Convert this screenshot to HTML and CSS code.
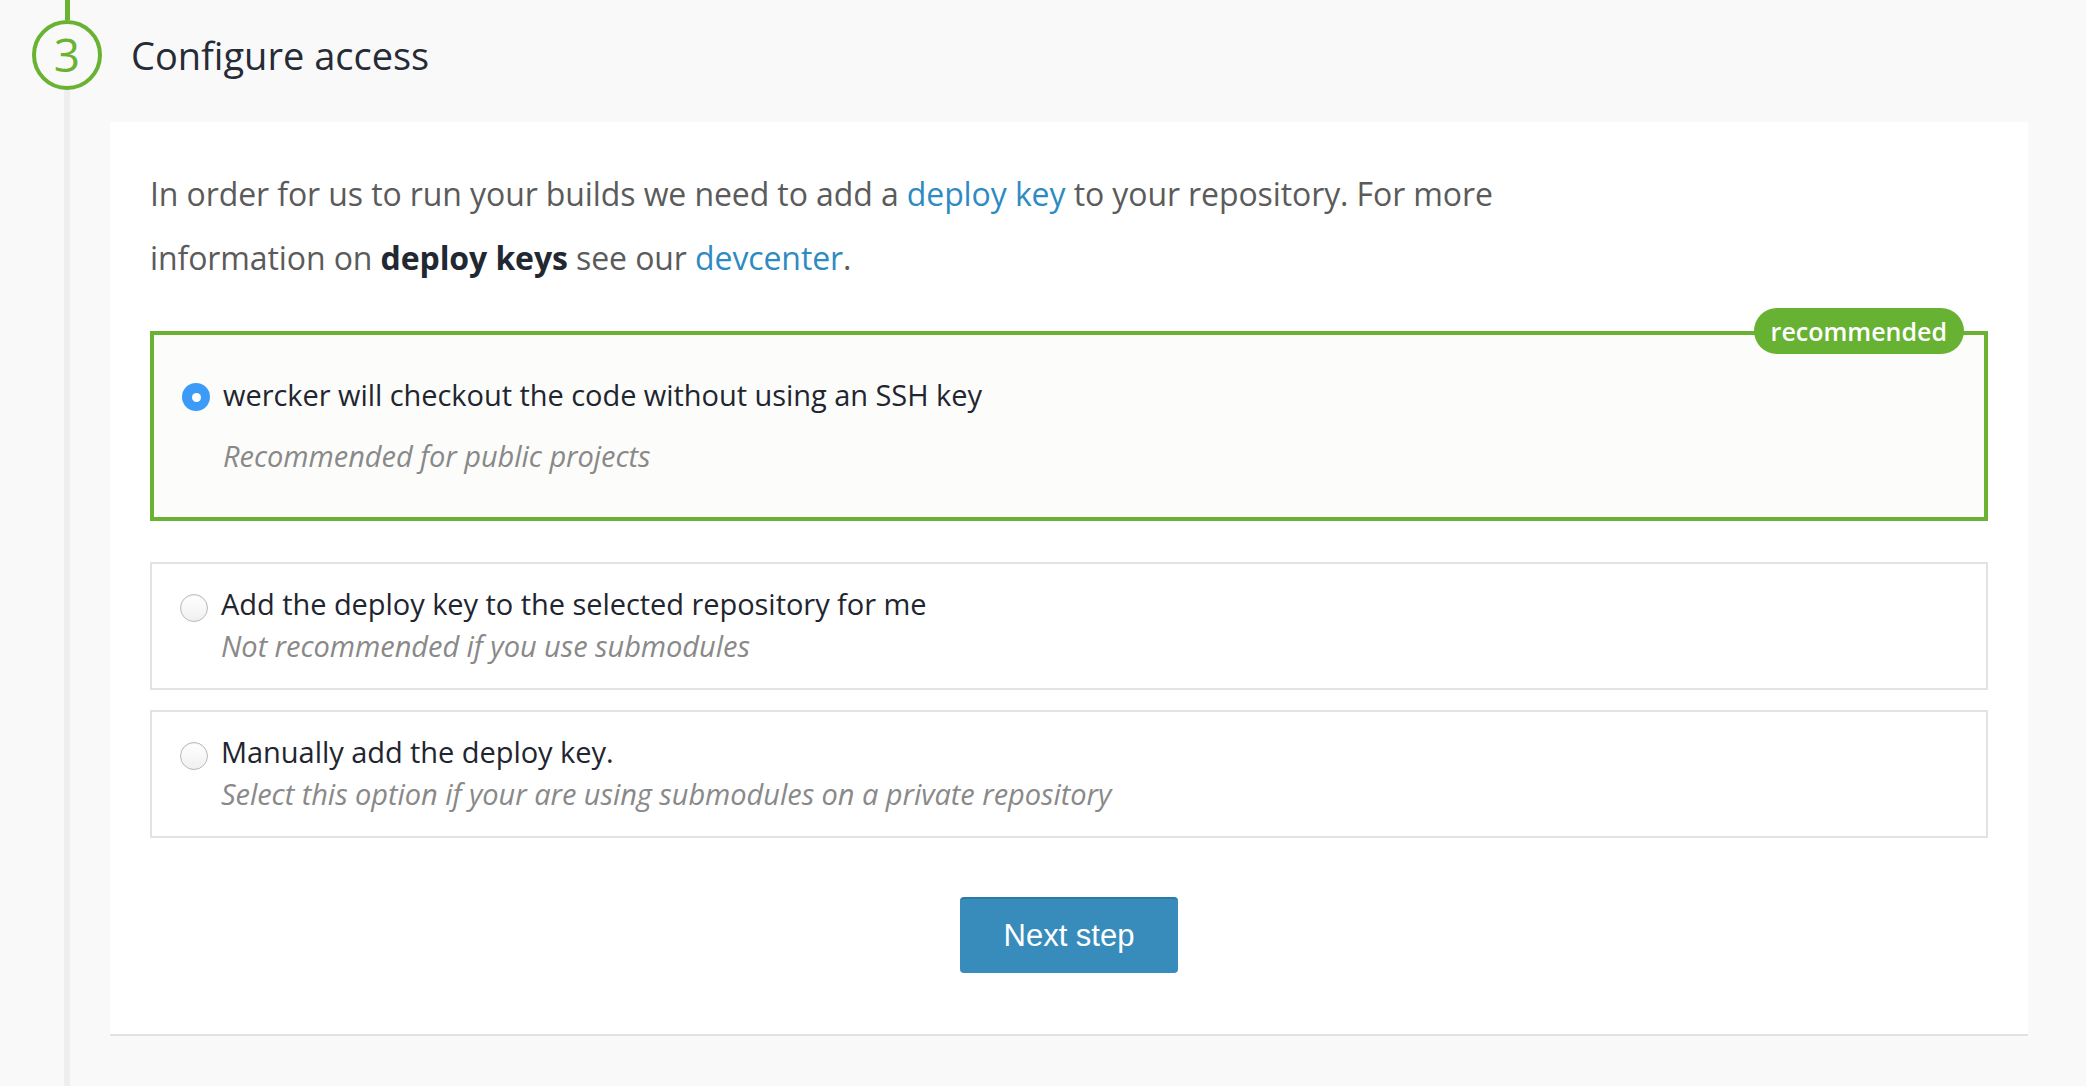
FILE: index.html
```html
<!DOCTYPE html>
<html lang="en">
<head>
<meta charset="utf-8">
<title>Configure access</title>
<link rel="stylesheet" href="styles.css">
</head>
<body>
<div class="step">
  <div class="rail">
    <div class="rail-top"></div>
    <div class="step-num">3</div>
    <div class="rail-line"></div>
  </div>
  <div class="step-main">
    <h2 class="step-title">Configure access</h2>
    <div class="card">
      <p class="intro">In order for us to run your builds we need to add a <a href="#">deploy key</a> to your repository. For more information on <strong>deploy keys</strong> see our <a href="#">devcenter</a>.</p>

      <div class="option option-selected">
        <span class="badge">recommended</span>
        <div class="option-row">
          <span class="radio radio-on"></span>
          <div class="option-text">
            <div class="option-label">wercker will checkout the code without using an SSH key</div>
            <div class="option-desc option-desc-spaced">Recommended for public projects</div>
          </div>
        </div>
      </div>

      <div class="option">
        <div class="option-row">
          <span class="radio"></span>
          <div class="option-text">
            <div class="option-label">Add the deploy key to the selected repository for me</div>
            <div class="option-desc">Not recommended if you use submodules</div>
          </div>
        </div>
      </div>

      <div class="option">
        <div class="option-row">
          <span class="radio"></span>
          <div class="option-text">
            <div class="option-label">Manually add the deploy key.</div>
            <div class="option-desc">Select this option if your are using submodules on a private repository</div>
          </div>
        </div>
      </div>

      <div class="actions">
        <button class="btn-next" type="button">Next step</button>
      </div>
    </div>
  </div>
</div>
</body>
</html>
```

FILE: styles.css
```css
html, body {
  margin: 0;
  padding: 0;
}

body {
  background: #f9f9f9;
  font-family: "Open Sans", "Noto Sans", sans-serif;
  color: #222831;
}

.step {
  display: grid;
  grid-template-columns: 110px 1fr;
  min-height: 100vh;
}

.rail {
  display: flex;
  flex-direction: column;
  align-items: flex-start;
  padding-left: 32px;
}

.rail-top {
  width: 5px;
  height: 20px;
  margin-left: 33px;
  background: #69b232;
}

.step-num {
  box-sizing: border-box;
  width: 70px;
  height: 70px;
  border: 4px solid #69b232;
  border-radius: 50%;
  display: flex;
  align-items: center;
  justify-content: center;
  color: #69b232;
  font-size: 46px;
  line-height: 1;
  padding-bottom: 3px;
}

.rail-line {
  flex: 1;
  width: 6px;
  margin-left: 32px;
  background: #eeeeee;
}

.step-main {
  margin-right: 58px;
}

.step-title {
  margin: 20px 0 32px;
  padding-left: 21px;
  height: 70px;
  line-height: 70px;
  font-size: 38px;
  font-weight: 400;
  color: #262b35;
}

.card {
  background: #ffffff;
  border-bottom: 2px solid #e2e2e2;
  padding: 40px 40px 61px;
}

.intro {
  margin: 0 0 41px;
  max-width: 1440px;
  font-size: 32px;
  letter-spacing: -0.1px;
  line-height: 64px;
  color: #5b5b5b;
}

.intro a {
  color: #2e8bc2;
  text-decoration: none;
}

.intro strong {
  font-weight: 700;
  color: #222831;
}

.option {
  position: relative;
  border: 2px solid #e3e3e3;
  background: #ffffff;
  padding: 20px 28px 22px;
  margin-bottom: 20px;
}

.option-selected {
  border: 4px solid #69b232;
  background: #fcfcfb;
  padding: 40px 28px 41px;
  margin-bottom: 41px;
}

.badge {
  position: absolute;
  top: -27px;
  right: 20px;
  height: 46px;
  padding: 0 17px;
  border-radius: 23px;
  background: #67b232;
  color: #ffffff;
  font-size: 25px;
  font-weight: 600;
  line-height: 46px;
}

.option-row {
  display: flex;
  align-items: flex-start;
  gap: 13px;
}

.radio {
  box-sizing: border-box;
  flex: none;
  width: 28px;
  height: 28px;
  margin-top: 10px;
  border-radius: 50%;
  border: 1px solid #b9b9b9;
  background: linear-gradient(#ffffff, #f0f0f0);
  box-shadow: inset 0 1px 1px rgba(0, 0, 0, 0.06);
}

.radio-on {
  margin-top: 8px;
  border: none;
  background: #3d9bf8;
  display: flex;
  align-items: center;
  justify-content: center;
  box-shadow: none;
}

.radio-on::after {
  content: "";
  width: 9px;
  height: 9px;
  border-radius: 50%;
  background: #ffffff;
}

.option-label {
  font-size: 29px;
  letter-spacing: -0.05px;
  line-height: 40px;
  color: #1f2630;
}

.option-desc {
  margin-top: 2px;
  font-size: 29px;
  letter-spacing: -0.05px;
  line-height: 40px;
  font-style: italic;
  color: #898989;
}

.option-desc-spaced {
  margin-top: 21px;
}

.actions {
  display: flex;
  justify-content: center;
  padding-top: 39px;
}

.btn-next {
  width: 218px;
  height: 76px;
  border: none;
  border-top: 2px solid #2b7aa6;
  border-radius: 4px;
  background: #388cbb;
  color: #ffffff;
  font-family: "Liberation Sans", Arial, sans-serif;
  font-size: 31px;
  cursor: pointer;
}
```
